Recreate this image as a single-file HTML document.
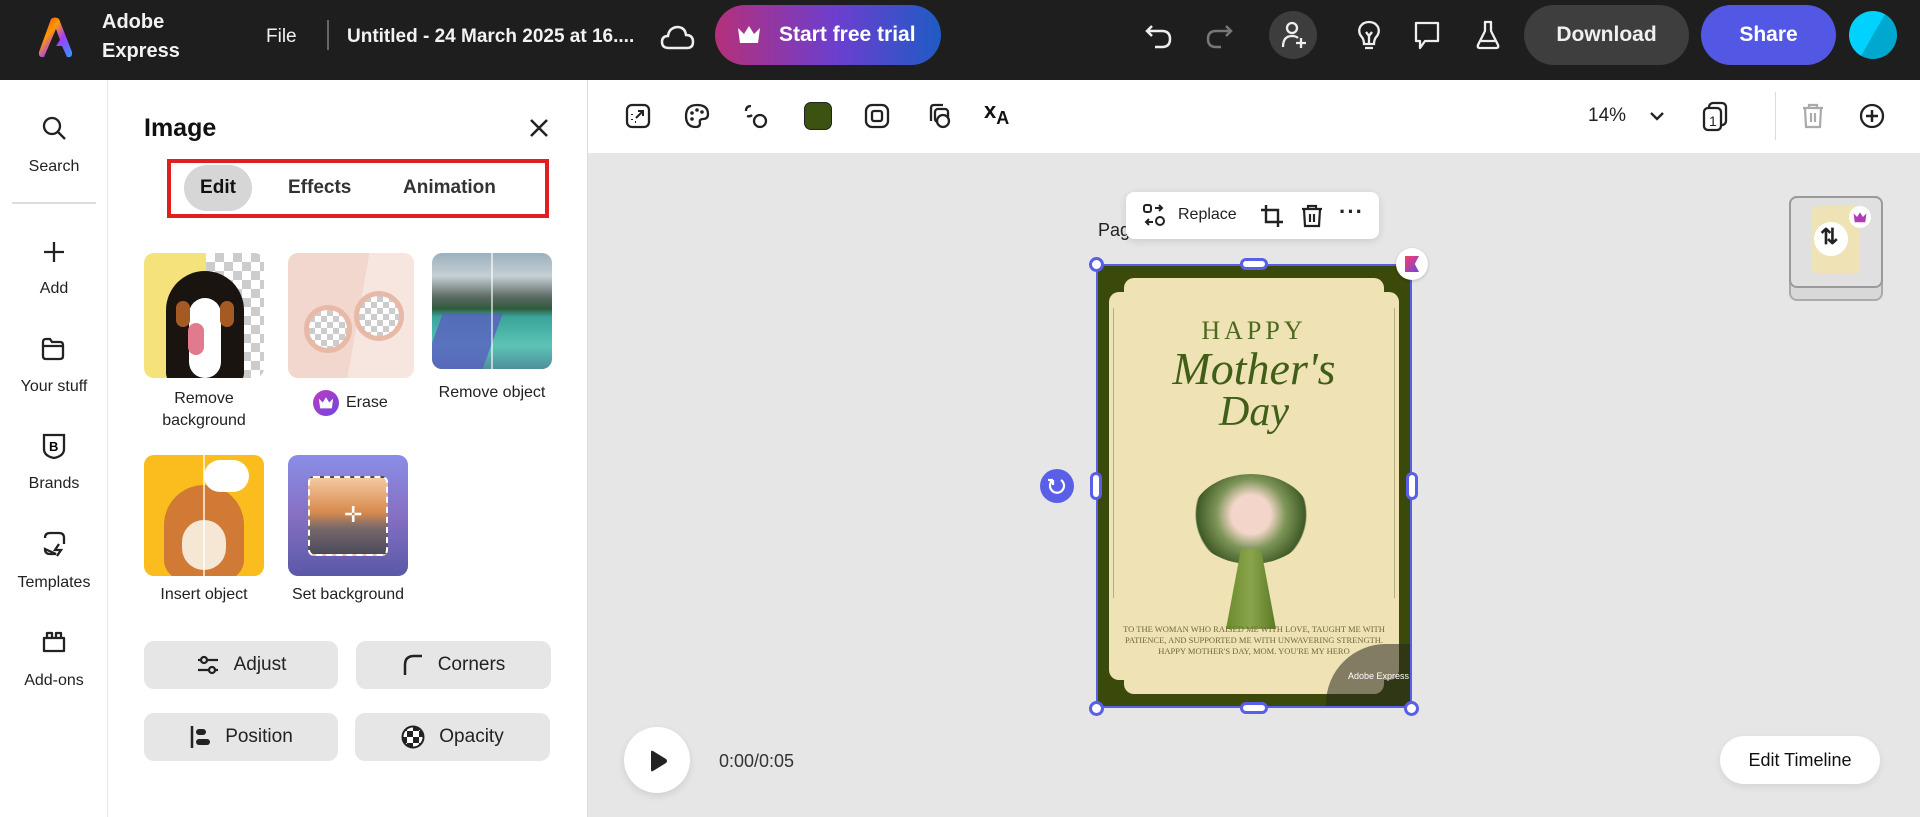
<!DOCTYPE html>
<html><head><meta charset="utf-8">
<style>
*{box-sizing:border-box;margin:0;padding:0}
body{width:1920px;height:817px;overflow:hidden;font-family:"Liberation Sans",sans-serif;background:#e6e6e6;position:relative;color:#222}
.abs{position:absolute}
#top{left:0;top:0;width:1920px;height:80px;background:#1e1e1e;color:#fff}
#top .t{position:absolute;font-weight:bold;font-size:20px;color:#f2f2f2}
.ic{position:absolute}
#rail{left:0;top:80px;width:108px;height:737px;background:#fff;border-right:1px solid #e8e8e8}
.ri{position:absolute;width:108px;text-align:center;font-size:16px;color:#222}
#panel{left:108px;top:80px;width:480px;height:737px;background:#fff;border-right:1px solid #ddd}
#tb{left:588px;top:80px;width:1332px;height:73px;background:#fff}
.lbl{position:absolute;font-size:16px;text-align:center;color:#222;line-height:22px}
.btn{position:absolute;background:#e6e6e6;border-radius:10px;font-size:19px;display:flex;align-items:center;justify-content:center;gap:14px;color:#222}
</style></head><body>

<div id="top" class="abs">
  <svg class="ic" style="left:36px;top:16px" width="38" height="44" viewBox="0 0 38 44">
    <defs><linearGradient id="lg" x1="0" y1="0" x2="1" y2="1"><stop offset="0" stop-color="#ff2a2a"/><stop offset=".35" stop-color="#ff9a00"/><stop offset=".6" stop-color="#a63cff"/><stop offset="1" stop-color="#2a9bff"/></linearGradient></defs>
    <path d="M15 3 Q19 0 23 3 L36 36 Q37 42 31 41 L26 30 L20 30 L24 24 L20 13 L8 41 Q2 42 3 36 Z" fill="url(#lg)"/>
  </svg>
  <div class="t" style="left:102px;top:8px;line-height:29px">Adobe<br>Express</div>
  <div class="t" style="left:266px;top:26px;font-weight:normal;font-size:19px">File</div>
  <div class="abs" style="left:327px;top:20px;width:2px;height:30px;background:#666"></div>
  <div class="t" style="left:347px;top:26px;font-size:19px">Untitled - 24 March 2025 at 16....</div>
  <svg class="ic" style="left:660px;top:22px" width="36" height="30" viewBox="0 0 36 30"><path d="M9 26 Q2 26 2 20 Q2 14 8 14 Q9 6 17 5 Q25 5 26 13 Q33 13 33 20 Q33 26 27 26 Z" fill="none" stroke="#eee" stroke-width="2.5"/></svg>
  <div class="abs" style="left:715px;top:5px;width:226px;height:60px;border-radius:30px;background:linear-gradient(90deg,#b5307a,#6a3fd0 55%,#1f5bc4);color:#fff;font-weight:bold;font-size:21px;display:flex;align-items:center;padding-left:64px">Start free trial</div>
  <svg class="ic" style="left:737px;top:24px" width="24" height="20" viewBox="0 0 24 20"><path d="M1 4 L7 10 L12 2 L17 10 L23 4 L21 19 L3 19 Z" fill="#fff"/></svg>
  <svg class="ic" style="left:1143px;top:20px" width="32" height="32" viewBox="0 0 32 32"><path d="M9 6 L4 11 L9 16 M4 11 H19 Q27 11 27 19 Q27 27 19 27 H12" fill="none" stroke="#eee" stroke-width="2.5"/></svg>
  <svg class="ic" style="left:1203px;top:20px" width="32" height="32" viewBox="0 0 32 32"><path d="M23 6 L28 11 L23 16 M28 11 H13 Q5 11 5 19 Q5 27 13 27 H18" fill="none" stroke="#777" stroke-width="2.5"/></svg>
  <div class="abs" style="left:1269px;top:11px;width:48px;height:48px;border-radius:24px;background:#3d3d3d"></div>
  <svg class="ic" style="left:1279px;top:20px" width="30" height="30" viewBox="0 0 30 30"><circle cx="13" cy="8" r="5" fill="none" stroke="#eee" stroke-width="2.3"/><path d="M4 27 Q4 16 13 16 Q17 16 19 18 M22 18 V28 M17 23 H27" fill="none" stroke="#eee" stroke-width="2.3"/></svg>
  <svg class="ic" style="left:1355px;top:20px" width="28" height="32" viewBox="0 0 28 32"><path d="M9 24 Q9 19 6 16 Q3 12 5 7 Q8 2 14 2 Q20 2 23 7 Q25 12 22 16 Q19 19 19 24 Z M10 28 H18 M11 12 L14 16 L17 12 M14 16 V23" fill="none" stroke="#eee" stroke-width="2.3"/></svg>
  <svg class="ic" style="left:1412px;top:20px" width="30" height="32" viewBox="0 0 30 32"><path d="M4 3 H26 V21 H13 L8 28 V21 H4 Z" fill="none" stroke="#eee" stroke-width="2.3" stroke-linejoin="round"/></svg>
  <svg class="ic" style="left:1474px;top:19px" width="28" height="32" viewBox="0 0 28 32"><path d="M10 3 H18 M11 3 V12 L4 26 Q3 29 6 29 H22 Q25 29 24 26 L17 12 V3 M7 22 H21" fill="none" stroke="#eee" stroke-width="2.3"/></svg>
  <div class="abs" style="left:1524px;top:5px;width:165px;height:60px;border-radius:30px;background:#3e3e3e;color:#f0f0f0;font-weight:bold;font-size:21px;display:flex;align-items:center;justify-content:center">Download</div>
  <div class="abs" style="left:1701px;top:5px;width:135px;height:60px;border-radius:30px;background:#5258e4;color:#fff;font-weight:bold;font-size:21px;display:flex;align-items:center;justify-content:center">Share</div>
  <div class="abs" style="left:1849px;top:11px;width:48px;height:48px;border-radius:24px;background:linear-gradient(120deg,#00d1ff 50%,#00a8cf 50%)"></div>
</div>

<div id="rail" class="abs">
  <svg class="ic" style="left:41px;top:35px" width="26" height="26" viewBox="0 0 26 26"><circle cx="11" cy="11" r="8" fill="none" stroke="#222" stroke-width="2.3"/><path d="M17 17 L24 24" stroke="#222" stroke-width="2.3"/></svg>
  <div class="ri" style="top:78px">Search</div>
  <div class="abs" style="left:12px;top:122px;width:84px;height:2px;background:#ddd"></div>
  <svg class="ic" style="left:42px;top:160px" width="24" height="24" viewBox="0 0 24 24"><path d="M12 2 V22 M2 12 H22" stroke="#222" stroke-width="2.3"/></svg>
  <div class="ri" style="top:200px">Add</div>
  <svg class="ic" style="left:40px;top:257px" width="26" height="24" viewBox="0 0 26 24"><path d="M3 5 Q3 2 6 2 H10 L12 5 H20 Q23 5 23 8 V19 Q23 22 20 22 H6 Q3 22 3 19 Z M3 9 H23" fill="none" stroke="#222" stroke-width="2.3"/></svg>
  <div class="ri" style="top:298px">Your stuff</div>
  <svg class="ic" style="left:41px;top:352px" width="26" height="28" viewBox="0 0 26 28"><path d="M3 3 H23 V17 Q23 24 13 26 Q3 24 3 17 Z" fill="none" stroke="#222" stroke-width="2.3"/><text x="8" y="19" font-size="13" font-weight="bold" font-family="Liberation Sans">B</text></svg>
  <div class="ri" style="top:395px">Brands</div>
  <svg class="ic" style="left:41px;top:450px" width="26" height="28" viewBox="0 0 26 28"><path d="M4 8 Q4 3 9 3 H18 Q23 3 23 8 V14 M15 24 H9 Q4 24 4 19 Z M18 14 L14 20 H20 L16 26" fill="none" stroke="#222" stroke-width="2.3"/></svg>
  <div class="ri" style="top:494px">Templates</div>
  <svg class="ic" style="left:41px;top:549px" width="26" height="26" viewBox="0 0 26 26"><path d="M3 9 H23 V22 H3 Z M6 9 V4 H11 V9 M15 9 V4 H20 V9" fill="none" stroke="#222" stroke-width="2.3" stroke-linejoin="round"/></svg>
  <div class="ri" style="top:592px">Add-ons</div>
</div>

<div id="panel" class="abs">
  <div class="abs" style="left:36px;top:34px;font-weight:bold;font-size:25px;color:#111">Image</div>
  <svg class="ic" style="left:421px;top:38px" width="20" height="20" viewBox="0 0 20 20"><path d="M2 2 L18 18 M18 2 L2 18" stroke="#222" stroke-width="2.5"/></svg>
  <div class="abs" style="left:59px;top:79px;width:382px;height:59px;border:4px solid #e02020"></div>
  <div class="abs" style="left:76px;top:85px;width:68px;height:46px;border-radius:23px;background:#d6d6d6;font-weight:bold;font-size:19px;display:flex;align-items:center;justify-content:center;color:#111">Edit</div>
  <div class="abs" style="left:180px;top:97px;font-weight:bold;font-size:19px;color:#333">Effects</div>
  <div class="abs" style="left:295px;top:97px;font-weight:bold;font-size:19px;color:#333">Animation</div>

  <!-- tile 1 -->
  <div class="abs" style="left:36px;top:173px;width:120px;height:125px;border-radius:10px;overflow:hidden;background:#f5e27a">
    <div class="abs" style="left:62px;top:0;width:58px;height:125px;background:repeating-conic-gradient(#ccc 0 25%,#fff 0 50%) 0 0/18px 18px"></div>
    <div class="abs" style="left:22px;top:18px;width:78px;height:112px;border-radius:40px 40px 10px 10px;background:#1a1410"></div>
    <div class="abs" style="left:45px;top:45px;width:32px;height:80px;border-radius:16px;background:#fff"></div>
    <div class="abs" style="left:32px;top:48px;width:14px;height:26px;background:#a55a24;border-radius:7px"></div>
    <div class="abs" style="left:76px;top:48px;width:14px;height:26px;background:#a55a24;border-radius:7px"></div>
    <div class="abs" style="left:44px;top:70px;width:16px;height:32px;background:#e07a8c;border-radius:8px"></div>
  </div>
  <div class="lbl" style="left:36px;top:308px;width:120px">Remove<br>background</div>
  <!-- tile 2 -->
  <div class="abs" style="left:180px;top:173px;width:126px;height:125px;border-radius:10px;overflow:hidden;background:linear-gradient(100deg,#f1d7ce 55%,#f7e6df 55%)">
    <div class="abs" style="left:16px;top:52px;width:48px;height:48px;border-radius:50%;border:5px solid #e9b9a7;background:repeating-conic-gradient(#ccc 0 25%,#fff 0 50%) 0 0/12px 12px"></div>
    <div class="abs" style="left:66px;top:38px;width:50px;height:50px;border-radius:50%;border:5px solid #e9b9a7;background:repeating-conic-gradient(#ccc 0 25%,#fff 0 50%) 0 0/12px 12px"></div>
  </div>
  <div class="abs" style="left:205px;top:310px;width:26px;height:26px;border-radius:13px;background:linear-gradient(135deg,#c03bc0,#6a47e0)"></div>
  <svg class="ic" style="left:210px;top:316px" width="16" height="13" viewBox="0 0 24 20"><path d="M1 4 L7 10 L12 2 L17 10 L23 4 L21 19 L3 19 Z" fill="#fff"/></svg>
  <div class="lbl" style="left:238px;top:312px;text-align:left">Erase</div>
  <!-- tile 3 -->
  <div class="abs" style="left:324px;top:173px;width:120px;height:116px;border-radius:10px;overflow:hidden;background:linear-gradient(180deg,#9cb0bd 0%,#c5cfd4 20%,#5b6a63 38%,#2f5a3b 48%,#3aa49a 55%,#5cc3b6 80%,#4f8f9a 100%)">
    <div class="abs" style="left:0;top:60px;width:60px;height:60px;background:#5a5fc0;opacity:.8;transform:skewX(-20deg)"></div>
    <div class="abs" style="left:59px;top:0;width:2px;height:116px;background:#fff;opacity:.6"></div>
  </div>
  <div class="lbl" style="left:324px;top:302px;width:120px">Remove object</div>
  <!-- tile 4 -->
  <div class="abs" style="left:36px;top:375px;width:120px;height:121px;border-radius:10px;overflow:hidden;background:#fbbd1e">
    <div class="abs" style="left:20px;top:30px;width:80px;height:95px;border-radius:40px 40px 20px 20px;background:#d17a35"></div>
    <div class="abs" style="left:38px;top:65px;width:44px;height:50px;border-radius:22px;background:#f6e6d4"></div>
    <div class="abs" style="left:60px;top:5px;width:45px;height:32px;border-radius:16px;background:#fff"></div>
    <div class="abs" style="left:59px;top:0;width:2px;height:121px;background:#fff;opacity:.7"></div>
  </div>
  <div class="lbl" style="left:36px;top:504px;width:120px">Insert object</div>
  <!-- tile 5 -->
  <div class="abs" style="left:180px;top:375px;width:120px;height:121px;border-radius:10px;overflow:hidden;background:linear-gradient(180deg,#8a8ee8,#8670c2 50%,#5a58a8)">
    <div class="abs" style="left:20px;top:21px;width:80px;height:80px;border:2px dashed #fff;border-radius:6px;background:linear-gradient(180deg,#f4c9a0,#d78a4d 45%,#7a6a6a 65%,#4a4a5a)"></div>
    <div class="abs" style="left:56px;top:47px;color:#fff;font-size:22px">✛</div>
  </div>
  <div class="lbl" style="left:170px;top:504px;width:140px">Set background</div>

  <div class="btn" style="left:36px;top:561px;width:194px;height:48px">
    <svg width="24" height="22" viewBox="0 0 24 22"><path d="M2 6 H22 M2 16 H22" stroke="#222" stroke-width="2.3"/><circle cx="8" cy="6" r="3" fill="#e6e6e6" stroke="#222" stroke-width="2.3"/><circle cx="16" cy="16" r="3" fill="#e6e6e6" stroke="#222" stroke-width="2.3"/></svg>Adjust</div>
  <div class="btn" style="left:248px;top:561px;width:195px;height:48px">
    <svg width="22" height="24" viewBox="0 0 22 24"><path d="M3 22 V12 Q3 3 12 3 H20" fill="none" stroke="#222" stroke-width="2.5"/></svg>Corners</div>
  <div class="btn" style="left:36px;top:633px;width:194px;height:48px">
    <svg width="22" height="26" viewBox="0 0 22 26"><path d="M3 2 V24" stroke="#222" stroke-width="2.5"/><rect x="7" y="5" width="10" height="6" rx="3" fill="#222"/><rect x="7" y="15" width="14" height="6" rx="3" fill="#222"/></svg>Position</div>
  <div class="btn" style="left:247px;top:633px;width:195px;height:48px">
    <svg width="24" height="24" viewBox="0 0 24 24"><defs><clipPath id="cc"><circle cx="12" cy="12" r="10.5"/></clipPath></defs><g clip-path="url(#cc)"><rect width="24" height="24" fill="#fff"/><g fill="#222"><rect x="0" y="0" width="6" height="6"/><rect x="12" y="0" width="6" height="6"/><rect x="6" y="6" width="6" height="6"/><rect x="18" y="6" width="6" height="6"/><rect x="0" y="12" width="6" height="6"/><rect x="12" y="12" width="6" height="6"/><rect x="6" y="18" width="6" height="6"/><rect x="18" y="18" width="6" height="6"/></g></g><circle cx="12" cy="12" r="10.5" fill="none" stroke="#222" stroke-width="2"/></svg>Opacity</div>
</div>

<div id="tb" class="abs">
  <svg class="ic" style="left:36px;top:22px" width="28" height="28" viewBox="0 0 28 28"><rect x="3" y="3" width="22" height="22" rx="5" fill="none" stroke="#222" stroke-width="2.3"/><path d="M12 16 L19 9 M14 9 H19 V14" fill="none" stroke="#222" stroke-width="2"/><path d="M8 12 v1 M8 17 v1 M11 20 h1" stroke="#222" stroke-width="2"/></svg>
  <svg class="ic" style="left:95px;top:22px" width="28" height="28" viewBox="0 0 28 28"><path d="M14 3 Q25 3 25 12 Q25 17 20 17 Q16 17 17 21 Q17 25 13 25 Q3 25 3 14 Q3 3 14 3 Z" fill="none" stroke="#222" stroke-width="2.3"/><circle cx="9" cy="11" r="1.8" fill="#222"/><circle cx="14" cy="8" r="1.8" fill="#222"/><circle cx="19" cy="10" r="1.8" fill="#222"/><circle cx="9" cy="17" r="1.8" fill="#222"/></svg>
  <svg class="ic" style="left:154px;top:22px" width="28" height="28" viewBox="0 0 28 28"><circle cx="18" cy="19" r="6" fill="none" stroke="#222" stroke-width="2.3"/><path d="M4 9 Q4 4 9 4 M5 14 Q8 15 10 13" fill="none" stroke="#222" stroke-width="2.3"/></svg>
  <div class="abs" style="left:216px;top:22px;width:28px;height:28px;border-radius:7px;background:#3b5210;border:1.5px solid #222"></div>
  <svg class="ic" style="left:275px;top:22px" width="28" height="28" viewBox="0 0 28 28"><rect x="3" y="3" width="22" height="22" rx="6" fill="none" stroke="#222" stroke-width="2.3"/><rect x="9" y="9" width="10" height="10" rx="2" fill="none" stroke="#222" stroke-width="2.3"/></svg>
  <svg class="ic" style="left:336px;top:22px" width="28" height="28" viewBox="0 0 28 28"><path d="M7 19 V6 Q7 3 10 3 H19" fill="none" stroke="#222" stroke-width="2.3"/><rect x="11" y="7" width="13" height="13" rx="3" fill="none" stroke="#222" stroke-width="2.3"/><circle cx="19" cy="19" r="6" fill="#fff" stroke="#222" stroke-width="2.3"/></svg>
  <div class="abs" style="left:396px;top:18px;font-weight:bold;font-size:22px;color:#111">x<span style="font-size:18px;position:relative;top:6px">A</span></div>
  <div class="abs" style="left:1000px;top:25px;font-size:19px;color:#222">14%</div>
  <svg class="ic" style="left:1061px;top:30px" width="16" height="12" viewBox="0 0 16 12"><path d="M2 3 L8 9 L14 3" fill="none" stroke="#222" stroke-width="2.3"/></svg>
  <svg class="ic" style="left:1112px;top:20px" width="30" height="32" viewBox="0 0 30 32"><rect x="9" y="3" width="17" height="22" rx="4" fill="none" stroke="#222" stroke-width="2.3"/><rect x="4" y="8" width="17" height="22" rx="4" fill="#fff" stroke="#222" stroke-width="2.3"/><text x="9" y="26" font-size="14" font-family="Liberation Sans" fill="#222">1</text></svg>
  <div class="abs" style="left:1187px;top:12px;width:1px;height:48px;background:#ddd"></div>
  <svg class="ic" style="left:1212px;top:22px" width="26" height="28" viewBox="0 0 26 28"><path d="M3 6 H23 M9 6 V3 H17 V6 M5 6 L6 25 H20 L21 6 M11 11 V20 M15 11 V20" fill="none" stroke="#aaa" stroke-width="2.2"/></svg>
  <svg class="ic" style="left:1270px;top:22px" width="28" height="28" viewBox="0 0 28 28"><circle cx="14" cy="14" r="11" fill="none" stroke="#222" stroke-width="2.3"/><path d="M14 8 V20 M8 14 H20" stroke="#222" stroke-width="2.5"/></svg>
</div>

<!-- canvas -->
<div class="abs" style="left:1098px;top:220px;font-size:18px;color:#222">Page <span style="color:#bbb">1 / 1 - Add title</span></div>
<div class="abs" style="left:1126px;top:192px;width:253px;height:47px;background:#fff;border-radius:8px;box-shadow:0 2px 8px rgba(0,0,0,.12)">
  <svg class="ic" style="left:15px;top:10px" width="26" height="26" viewBox="0 0 26 26"><rect x="3" y="3" width="7" height="7" rx="2" fill="none" stroke="#222" stroke-width="2"/><circle cx="19" cy="19" r="4" fill="none" stroke="#222" stroke-width="2"/><path d="M14 6 H21 M18 3 L21 6 L18 9 M12 20 H5 M8 17 L5 20 L8 23" fill="none" stroke="#222" stroke-width="2"/></svg>
  <div class="abs" style="left:52px;top:14px;font-size:16px;color:#222">Replace</div>
  <svg class="ic" style="left:133px;top:11px" width="26" height="26" viewBox="0 0 26 26"><path d="M7 2 V19 H24 M2 7 H19 V24" fill="none" stroke="#222" stroke-width="2.4"/></svg>
  <svg class="ic" style="left:174px;top:11px" width="24" height="26" viewBox="0 0 24 26"><path d="M2 6 H22 M8 6 V3 H16 V6 M4 6 L5 23 H19 L20 6 M10 11 V19 M14 11 V19" fill="none" stroke="#222" stroke-width="2.2"/></svg>
  <div class="abs" style="left:213px;top:7px;font-size:22px;font-weight:bold;color:#222;letter-spacing:1px">···</div>
</div>

<div class="abs" style="left:1096px;top:264px;width:316px;height:444px;background:#3b4a0b;overflow:hidden">
  <div class="abs" style="left:28px;top:14px;width:260px;height:416px;background:#efe2b5;border-radius:10px"></div>
  <div class="abs" style="left:13px;top:28px;width:290px;height:388px;background:#efe2b5;border-radius:10px"></div>
  <div class="abs" style="left:17px;top:44px;width:1px;height:290px;background:#b6ad82"></div>
  <div class="abs" style="left:298px;top:44px;width:1px;height:290px;background:#b6ad82"></div>
  <div class="abs" style="left:0;top:52px;width:316px;text-align:center;font-family:'Liberation Serif',serif;font-size:26px;color:#4a6a1e;letter-spacing:4px">HAPPY</div>
  <div class="abs" style="left:0;top:78px;width:316px;text-align:center;font-family:'Liberation Serif',serif;font-style:italic;font-size:46px;color:#3f5f18">Mother's</div>
  <div class="abs" style="left:0;top:124px;width:316px;text-align:center;font-family:'Liberation Serif',serif;font-style:italic;font-size:42px;color:#3f5f18">Day</div>
  <div class="abs" style="left:95px;top:210px;width:120px;height:90px;border-radius:50%;background:radial-gradient(circle at 50% 45%,#f3d6c9 0 25%,#7d9557 45%,#3f5a27 70%,rgba(0,0,0,0) 72%)"></div>
  <div class="abs" style="left:130px;top:285px;width:50px;height:80px;background:linear-gradient(90deg,#6b8a2d,#8aa54b,#5b7a25);clip-path:polygon(30% 0,70% 0,100% 100%,0 100%)"></div>
  <div class="abs" style="left:20px;top:360px;width:276px;text-align:center;font-family:'Liberation Serif',serif;font-size:8.5px;line-height:11px;color:#6d6a3a">TO THE WOMAN WHO RAISED ME WITH LOVE, TAUGHT ME WITH PATIENCE, AND SUPPORTED ME WITH UNWAVERING STRENGTH. HAPPY MOTHER'S DAY, MOM. YOU'RE MY HERO</div>
  <div class="abs" style="left:230px;top:380px;width:120px;height:120px;border-radius:60px 0 0 0;background:rgba(40,40,30,.55)"></div>
  <div class="abs" style="left:252px;top:407px;font-size:9px;color:#fff">Adobe Express</div>
</div>
<div class="abs" style="left:1096px;top:264px;width:316px;height:444px;border:2px solid #5a5fe8"></div>
<div class="abs" style="left:1089px;top:257px;width:15px;height:15px;border-radius:50%;background:#fff;border:3px solid #5a5fe8"></div>
<div class="abs" style="left:1404px;top:701px;width:15px;height:15px;border-radius:50%;background:#fff;border:3px solid #5a5fe8"></div>
<div class="abs" style="left:1089px;top:701px;width:15px;height:15px;border-radius:50%;background:#fff;border:3px solid #5a5fe8"></div>
<div class="abs" style="left:1240px;top:258px;width:28px;height:12px;border-radius:6px;background:#fff;border:3px solid #5a5fe8"></div>
<div class="abs" style="left:1240px;top:702px;width:28px;height:12px;border-radius:6px;background:#fff;border:3px solid #5a5fe8"></div>
<div class="abs" style="left:1090px;top:472px;width:12px;height:28px;border-radius:6px;background:#fff;border:3px solid #5a5fe8"></div>
<div class="abs" style="left:1406px;top:472px;width:12px;height:28px;border-radius:6px;background:#fff;border:3px solid #5a5fe8"></div>
<div class="abs" style="left:1396px;top:248px;width:32px;height:32px;border-radius:50%;background:#fff;box-shadow:0 1px 3px rgba(0,0,0,.2)"></div>
<div class="abs" style="left:1405px;top:256px;width:14px;height:16px;background:linear-gradient(135deg,#ff3b6b,#6a47e0);clip-path:polygon(0 0,100% 0,70% 50%,100% 100%,0 100%)"></div>
<div class="abs" style="left:1040px;top:469px;width:34px;height:34px;border-radius:50%;background:#5a5fe8"></div>
<svg class="ic" style="left:1047px;top:476px" width="20" height="20" viewBox="0 0 20 20"><path d="M6 4 A7 7 0 1 0 14 4 M6 4 V9 M6 4 H1" fill="none" stroke="#fff" stroke-width="2.2"/></svg>

<!-- page thumbnail -->
<div class="abs" style="left:1789px;top:196px;width:94px;height:105px;border-radius:8px;background:#d8d8d8;border:2px solid #aaa"></div>
<div class="abs" style="left:1789px;top:196px;width:94px;height:92px;border-radius:8px;background:#e0e0e0;border:2px solid #9a9a9a"></div>
<div class="abs" style="left:1812px;top:206px;width:48px;height:68px;border-radius:6px;background:#efe2b5"></div>
<div class="abs" style="left:1814px;top:222px;width:34px;height:34px;border-radius:50%;background:#fff"></div>
<div class="abs" style="left:1820px;top:224px;font-size:22px;font-weight:bold;color:#222">⇅</div>
<div class="abs" style="left:1849px;top:206px;width:22px;height:22px;border-radius:50%;background:#fff"></div>
<svg class="ic" style="left:1853px;top:211px" width="14" height="12" viewBox="0 0 24 20"><path d="M1 4 L7 10 L12 2 L17 10 L23 4 L21 19 L3 19 Z" fill="#b03ab8"/></svg>

<!-- bottom -->
<div class="abs" style="left:624px;top:727px;width:66px;height:66px;border-radius:50%;background:#fff;box-shadow:0 3px 8px rgba(0,0,0,.1)"></div>
<svg class="ic" style="left:648px;top:750px" width="20" height="22" viewBox="0 0 20 22"><path d="M3 2 Q3 0 5 1 L18 9 Q20 11 18 13 L5 21 Q3 22 3 20 Z" fill="#222"/></svg>
<div class="abs" style="left:719px;top:751px;font-size:18px;color:#333">0:00/0:05</div>
<div class="abs" style="left:1720px;top:736px;width:160px;height:48px;border-radius:24px;background:#fff;box-shadow:0 3px 8px rgba(0,0,0,.08);font-size:18px;color:#111;display:flex;align-items:center;justify-content:center">Edit Timeline</div>
</body></html>
